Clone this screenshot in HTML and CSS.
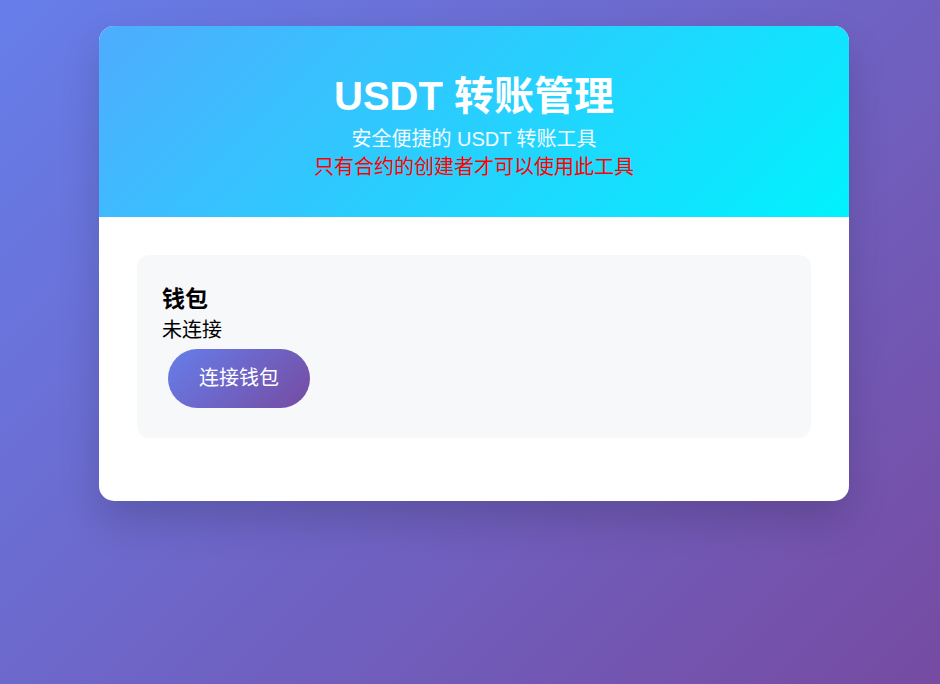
FILE: index.html
```html
<!DOCTYPE html>
<html lang="zh">
<head>
<meta charset="utf-8">
<title>USDT 转账管理</title>
<link rel="stylesheet" href="styles.css">
</head>
<body>
<div class="card">
  <header class="header">
    <h1 class="title">USDT 转账管理</h1>
    <p class="subtitle">安全便捷的 USDT 转账工具</p>
    <p class="warning">只有合约的创建者才可以使用此工具</p>
  </header>
  <main class="content">
    <section class="wallet">
      <h3 class="wallet-title">钱包</h3>
      <div class="wallet-status">未连接</div>
      <button class="btn">连接钱包</button>
    </section>
  </main>
</div>
</body>
</html>
```
FILE: styles.css
```css
html, body {
  margin: 0;
  padding: 0;
}
body {
  min-height: 684px;
  background: linear-gradient(135deg, #667eea 0%, #764ba2 100%);
  font-family: "Liberation Sans", "Noto Sans CJK SC", sans-serif;
  padding: 26px 0 0 8px;
  box-sizing: border-box;
}
.card {
  width: 750px;
  margin: 0 auto;
  background: #fff;
  border-radius: 15px;
  overflow: hidden;
  box-shadow: 0 20px 40px rgba(0, 0, 0, 0.16);
}
.header {
  background: linear-gradient(135deg, #4facfe 0%, #00f2fe 100%);
  color: #fff;
  text-align: center;
  padding: 40px 20px 37px;
}
.title {
  margin: 6px 0 5px;
  font-size: 40px;
  line-height: 48px;
  font-weight: 700;
}
.subtitle, .warning {
  margin: 0;
  font-size: 20px;
  line-height: 28px;
  opacity: 0.95;
}
.subtitle {
  margin-bottom: 0;
}
.warning {
  color: #ff0000;
  opacity: 1;
  margin-bottom: -1px;
}
.content {
  padding: 38px 38px 63px;
}
.wallet {
  background: #f7f8fa;
  border-radius: 12px;
  padding: 25px 25px 30px;
}
.wallet-title {
  margin: 4px 0 0;
  font-size: 23px;
  line-height: 30px;
  font-weight: 700;
  color: #000;
}
.wallet-status {
  margin-top: 2px;
  margin-bottom: -1px;
  font-size: 20px;
  line-height: 28px;
  color: #000;
}
.btn {
  margin: 6px 0 0 6px;
  border: none;
  border-radius: 30px;
  background: linear-gradient(135deg, #667eea 0%, #764ba2 100%);
  color: #fff;
  font-family: inherit;
  font-size: 20px;
  line-height: 29px;
  padding: 15px 31px;
  cursor: pointer;
}
```
